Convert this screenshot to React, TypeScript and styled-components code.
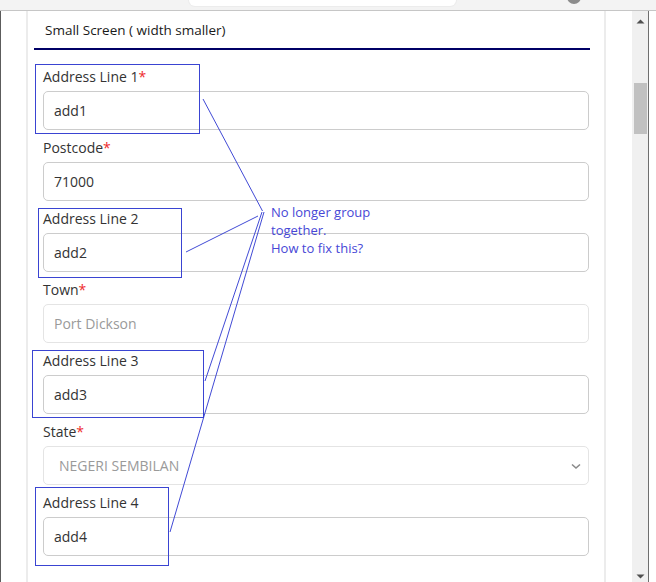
import React from "react";
import styled, { createGlobalStyle } from "styled-components";

const Global = createGlobalStyle`
  html, body { margin: 0; padding: 0; background: #ffffff; }
  * { box-sizing: border-box; }
`;

const Window = styled.div`
  position: relative;
  width: 656px;
  height: 582px;
  overflow: hidden;
  font-family: "Open Sans", "Noto Sans", sans-serif;
  background: #ffffff;
`;

const BrowserStrip = styled.div`
  display: flex;
  align-items: flex-start;
  height: 11px;
  background: #f3f3f3;
  border-bottom: 1px solid #c6c6c6;
  overflow: hidden;
`;

const SearchBox = styled.div`
  margin-left: 189px;
  margin-top: -10px;
  width: 267px;
  height: 16px;
  border-radius: 6px;
  background: #ffffff;
  box-shadow: 0 0 0 1px #ececec;
`;

const ProfileDot = styled.div`
  margin-left: 111px;
  margin-top: -10px;
  width: 14px;
  height: 14px;
  border-radius: 50%;
  background: #8c8c8c;
`;

const Body = styled.div`
  display: flex;
  height: 571px;
  border-left: 1px solid #5c5c5c;
`;

const Viewport = styled.div`
  flex: 1;
  padding-left: 25px;
  overflow: hidden;
  background: #ffffff;
`;

const Card = styled.div`
  width: 580px;
  height: 100%;
  border-left: 2px solid #ececec;
  border-right: 2px solid #ececec;
  background: #ffffff;
`;

const Header = styled.div`
  margin: 0 14px 0 6px;
  padding: 10px 0 9px 11px;
  border-bottom: 2px solid #000066;
`;

const HeaderTitle = styled.div`
  font-size: 13.5px;
  line-height: 18px;
  color: #1a1a1a;
`;

const Form = styled.div`
  display: flex;
  flex-direction: column;
  gap: 8px;
  padding: 17px 15px 0 15px;
`;

const Group = styled.div`
  display: flex;
  flex-direction: column;
  gap: 4px;
`;

const Label = styled.div`
  font-size: 14px;
  line-height: 20px;
  color: #333333;
`;

const Star = styled.span`
  color: #ee2b2b;
`;

const TextInput = styled.input<{ $disabled?: boolean }>`
  display: block;
  width: 100%;
  height: 39px;
  margin: 0;
  padding: 0 10px;
  border: 1px solid ${(p) => (p.$disabled ? "#e4e4e4" : "#cccccc")};
  border-radius: 5px;
  background: #ffffff;
  font-family: "Open Sans", "Noto Sans", sans-serif;
  font-size: 14px;
  color: ${(p) => (p.$disabled ? "#9a9a9a" : "#333333")};
  outline: none;
`;

const SelectBox = styled.div`
  display: flex;
  align-items: center;
  justify-content: space-between;
  height: 39px;
  padding: 0 6px 0 15px;
  border: 1px solid #e4e4e4;
  border-radius: 5px;
  background: #ffffff;
  font-size: 14px;
  color: #9a9a9a;
  text-transform: uppercase;
`;

const ScrollTrack = styled.div`
  display: flex;
  flex-direction: column;
  align-items: center;
  justify-content: space-between;
  width: 17px;
  background: #f0f0f0;
  border-right: 1px solid #6e6e6e;
  padding: 8px 0 3px 0;
`;

const ScrollThumb = styled.div`
  width: 13px;
  height: 51px;
  background: #c1c1c1;
  margin-top: 59px;
  margin-left: 1px;
`;

const ScrollSpacer = styled.div`
  flex: 1;
`;

const EdgeGap = styled.div`
  width: 7px;
  background: #ffffff;
`;

const Overlay = styled.svg`
  position: absolute;
  left: 0;
  top: 0;
  pointer-events: none;
`;

const HighlightBox = styled.div`
  position: absolute;
  border: 1px solid #3a44d2;
  pointer-events: none;
`;

const Note = styled.div`
  position: absolute;
  left: 271px;
  top: 203px;
  font-family: "Open Sans", "Noto Sans", sans-serif;
  font-size: 13px;
  line-height: 18px;
  color: #4747d6;
`;

type Field = {
  label: string;
  value: string;
  required?: boolean;
  disabled?: boolean;
  select?: boolean;
};

const fields: Field[] = [
  { label: "Address Line 1", value: "add1", required: true },
  { label: "Postcode", value: "71000", required: true },
  { label: "Address Line 2", value: "add2" },
  { label: "Town", value: "Port Dickson", required: true, disabled: true },
  { label: "Address Line 3", value: "add3" },
  { label: "State", value: "NEGERI SEMBILAN", required: true, select: true },
  { label: "Address Line 4", value: "add4" },
];

const boxes = [
  { left: 35, top: 64, width: 165, height: 70 },
  { left: 38, top: 208, width: 144, height: 70 },
  { left: 32, top: 350, width: 172, height: 68 },
  { left: 35, top: 487, width: 134, height: 79 },
];

const Chevron = () => (
  <svg width="12" height="12" viewBox="0 0 12 12">
    <path d="M2 4.5 L6 8 L10 4.5" fill="none" stroke="#8a8a8a" strokeWidth="1.6" />
  </svg>
);

const Arrow = ({ down }: { down?: boolean }) => (
  <svg width="9" height="5" viewBox="0 0 9 5">
    <path d={down ? "M0.5 0.5 H8.5 L4.5 4.5 Z" : "M0.5 4.5 H8.5 L4.5 0.5 Z"} fill="#505050" />
  </svg>
);

export default function App() {
  return (
    <>
      <Global />
      <Window>
        <BrowserStrip>
          <SearchBox />
          <ProfileDot />
        </BrowserStrip>
        <Body>
          <Viewport>
            <Card>
              <Header>
                <HeaderTitle>Small Screen ( width smaller)</HeaderTitle>
              </Header>
              <Form>
                {fields.map((f) => (
                  <Group key={f.label}>
                    <Label>
                      {f.label}
                      {f.required && <Star>*</Star>}
                    </Label>
                    {f.select ? (
                      <SelectBox>
                        <span>{f.value}</span>
                        <Chevron />
                      </SelectBox>
                    ) : (
                      <TextInput readOnly value={f.value} $disabled={f.disabled} />
                    )}
                  </Group>
                ))}
              </Form>
            </Card>
          </Viewport>
          <ScrollTrack>
            <Arrow />
            <ScrollThumb />
            <ScrollSpacer />
            <Arrow down />
          </ScrollTrack>
          <EdgeGap />
        </Body>
        {boxes.map((b, i) => (
          <HighlightBox key={i} style={b} />
        ))}
        <Overlay width="656" height="582" viewBox="0 0 656 582">
          <g fill="none" stroke="#2b36d0" strokeWidth="0.9">
            <line x1="203" y1="99" x2="262.5" y2="211" />
            <line x1="186" y1="252" x2="258" y2="216" />
            <line x1="262" y1="212" x2="205" y2="381" />
            <line x1="264" y1="212" x2="170" y2="532" />
          </g>
        </Overlay>
        <Note>
          No longer group
          <br />
          together.
          <br />
          How to fix this?
        </Note>
      </Window>
    </>
  );
}
